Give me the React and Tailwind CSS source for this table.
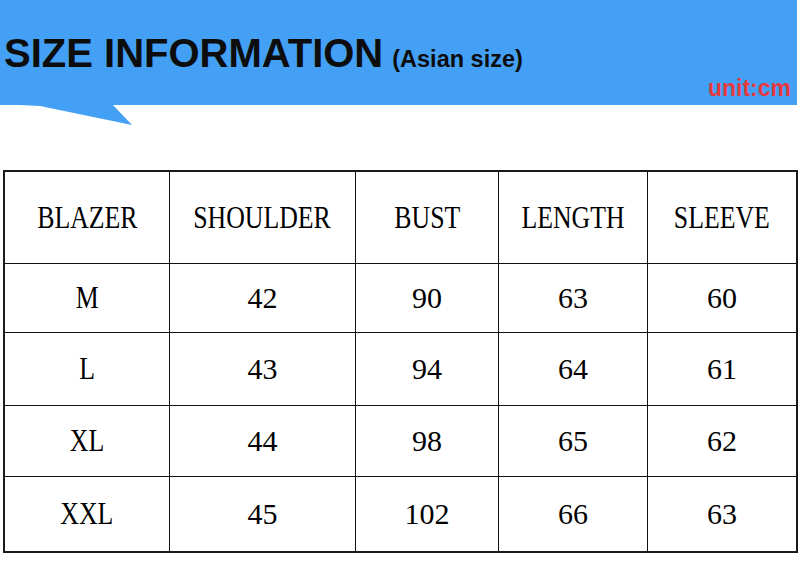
import React from 'react';

const columns = ['BLAZER', 'SHOULDER', 'BUST', 'LENGTH', 'SLEEVE'];

const rows = [
  { size: 'M', values: ['42', '90', '63', '60'], h: 'h-[69px]' },
  { size: 'L', values: ['43', '94', '64', '61'], h: 'h-[73px]' },
  { size: 'XL', values: ['44', '98', '65', '62'], h: 'h-[71px]' },
  { size: 'XXL', values: ['45', '102', '66', '63'], h: 'h-[74px]' },
];

function Cell({ children, last, bottom, letters }) {
  return (
    <div
      className={`flex items-center justify-center ${last ? '' : 'border-r border-[#111]'} ${bottom ? '' : 'border-b border-[#111]'}`}
    >
      <span className={`inline-block text-[30px] leading-none text-black ${letters ? 'scale-x-[0.86] scale-y-[1.05]' : ''}`}>
        {children}
      </span>
    </div>
  );
}

export default function App() {
  return (
    <div className="w-[800px] h-[586px] bg-white overflow-hidden" style={{ fontFamily: '"Liberation Sans", Arial, sans-serif' }}>
      {/* Blue banner */}
      <div className="relative w-[797px] h-[105px] bg-[#43a0f5]">
        <div className="flex items-baseline pt-[33px] pl-[4px]">
          <h1 className="text-[40px] leading-[40px] font-bold text-[#0d0d0d]">SIZE INFORMATION</h1>
          <span className="ml-[9px] text-[23.5px] font-bold text-[#0d0d0d]">(Asian size)</span>
        </div>
        <div className="flex justify-end pr-[6px]">
          <span className="text-[23px] leading-[23px] font-bold text-[#e4393f]">unit:cm</span>
        </div>
        <svg className="absolute left-0 top-full" width="140" height="22" viewBox="0 0 140 22">
          <polygon points="0,-1 40,1 132,20 112,-1" fill="#43a0f5" />
        </svg>
      </div>

      {/* Size table */}
      <div
        className="mt-[65px] ml-[3px] w-[795px] border-[2.5px] border-[#1a1a1a]"
        style={{ fontFamily: '"Liberation Serif", "Times New Roman", serif' }}
      >
        <div className="grid grid-cols-[165px_186px_143px_149px_1fr] h-[92px]">
          {columns.map((c, i) => (
            <Cell key={c} last={i === columns.length - 1} letters>
              {c}
            </Cell>
          ))}
        </div>
        {rows.map((r, ri) => (
          <div key={r.size} className={`grid grid-cols-[165px_186px_143px_149px_1fr] ${r.h}`}>
            <Cell letters bottom={ri === rows.length - 1}>{r.size}</Cell>
            {r.values.map((v, i) => (
              <Cell key={i} last={i === r.values.length - 1} bottom={ri === rows.length - 1}>
                {v}
              </Cell>
            ))}
          </div>
        ))}
      </div>
    </div>
  );
}
